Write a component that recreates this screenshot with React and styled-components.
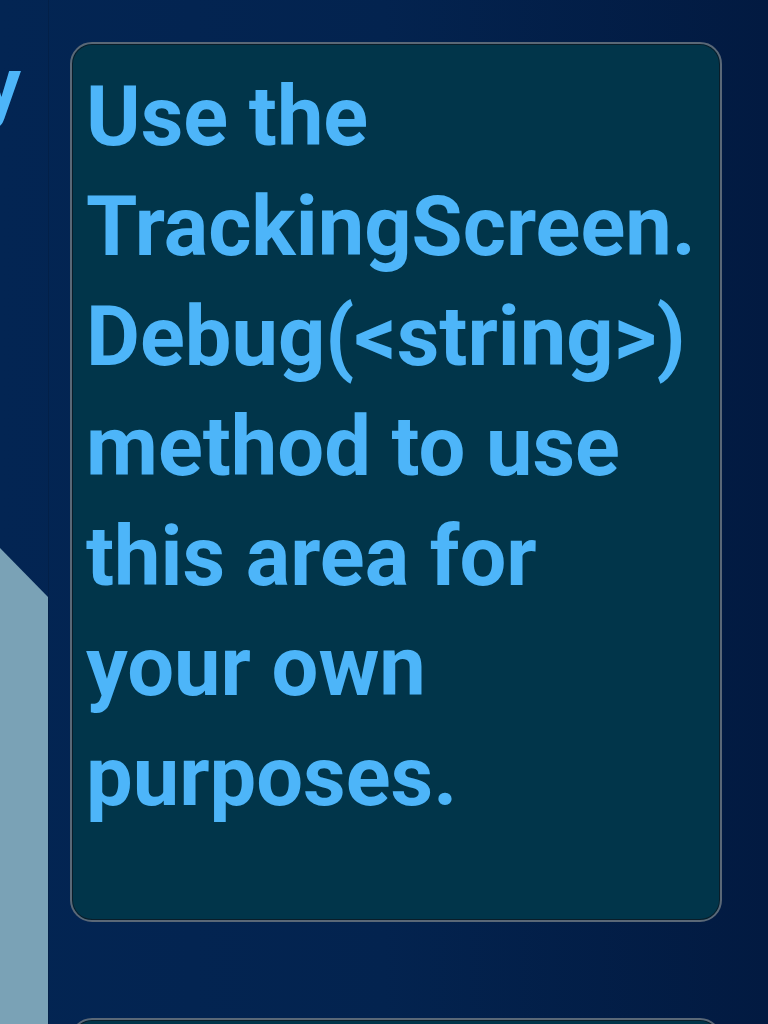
import React from "react";
import styled, { createGlobalStyle } from "styled-components";

const Global = createGlobalStyle`
  html, body { margin: 0; padding: 0; }
  body {
    width: 768px;
    height: 1024px;
    overflow: hidden;
    background: linear-gradient(to right, #032553 0%, #03234f 50%, #021a41 100%);
    font-family: Roboto, "Liberation Sans", sans-serif;
  }
`;

const Screen = styled.div`
  display: flex;
  height: 1024px;
  width: 768px;
  overflow: hidden;
`;

const SidePanel = styled.aside`
  width: 48px;
  flex: none;
  display: flex;
  flex-direction: column;
  border-right: 1px solid #032048;
`;

const SideLabel = styled.div`
  display: flex;
  justify-content: flex-end;
  padding-right: 27px;
  overflow: hidden;
  white-space: nowrap;
  font-weight: 700;
  font-size: 78px;
  line-height: 110px;
  color: #4db5f9;
  margin-top: 31px;
`;

const Spacer = styled.div`
  flex: 1;
`;

const AreaChart = styled.svg`
  display: block;
  width: 48px;
  height: 476px;
  flex: none;
`;

const Main = styled.main`
  flex: 1;
  display: flex;
  flex-direction: column;
  gap: 96px;
  padding: 42px 46px 0 21px;
`;

const Card = styled.section`
  flex: none;
  height: ${(p) => p.$height}px;
  box-sizing: border-box;
  background: #01354a;
  border: 2px solid #5a6877;
  border-radius: 22px;
  box-shadow: inset 0 0 0 1px #0a1d29;
  padding: 18px 14px;
`;

const Message = styled.p`
  margin: 0;
  font-weight: 700;
  font-size: 83px;
  line-height: 110px;
  color: #4db5f9;
`;

export default function App() {
  return (
    <>
      <Global />
      <Screen>
        <SidePanel>
          <SideLabel>Accuracy</SideLabel>
          <Spacer />
          <AreaChart viewBox="0 0 48 476" preserveAspectRatio="none">
            <polygon points="0,0 48,49 48,476 0,476" fill="#7aa2b6" />
          </AreaChart>
        </SidePanel>
        <Main>
          <Card $height={880}>
            <Message>
              Use the TrackingScreen. Debug(&lt;string&gt;) method to use this area for your own purposes.
            </Message>
          </Card>
          <Card $height={200} />
        </Main>
      </Screen>
    </>
  );
}
